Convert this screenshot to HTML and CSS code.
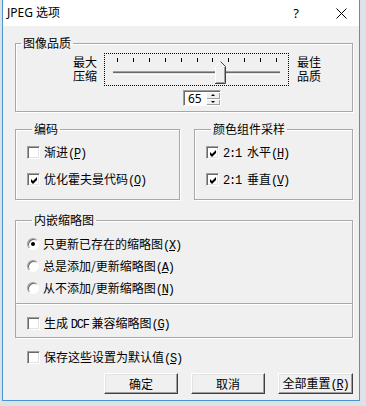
FILE: index.html
```html
<!DOCTYPE html>
<html lang="zh-CN">
<head>
    <meta charset="UTF-8">
    <title>JPEG 选项</title>
    <link rel="stylesheet" href="styles.css">
</head>
<body>
    <div class="dialog">
        <div class="titlebar">
            <span class="title">JPEG 选项</span>
            <span class="help">?</span>
            <span class="close">
                <svg width="11" height="11" viewBox="0 0 11 11"><path d="M0.5 0.5 L10.5 10.5 M10.5 0.5 L0.5 10.5" stroke="#000" stroke-width="1" fill="none"/></svg>
            </span>
        </div>

        <div class="content">
            <fieldset class="group quality">
                <legend>图像品质</legend>
                <div class="slider-row">
                    <div class="side-label"><div>最大</div><div>压缩</div></div>
                    <div class="slider">
                        <svg width="183" height="31" viewBox="0 0 183 31">
                            <g fill="#000">
                                <rect x="12" y="4" width="1" height="4"/>
                                <rect x="28" y="4" width="1" height="4"/>
                                <rect x="44" y="4" width="1" height="4"/>
                                <rect x="60" y="4" width="1" height="4"/>
                                <rect x="76" y="4" width="1" height="4"/>
                                <rect x="92" y="4" width="1" height="4"/>
                                <rect x="107" y="4" width="1" height="4"/>
                                <rect x="123" y="4" width="1" height="4"/>
                                <rect x="139" y="4" width="1" height="4"/>
                                <rect x="155" y="4" width="1" height="4"/>
                                <rect x="171" y="4" width="1" height="4"/>
                            </g>
                            <rect x="8" y="17" width="167" height="1" fill="#a0a0a0"/>
                            <rect x="8" y="18" width="167" height="1" fill="#696969"/>
                            <rect x="8" y="19" width="167" height="1" fill="#e3e3e3"/>
                            <rect x="8" y="20" width="167" height="1" fill="#fff"/>
                            <polygon points="110,12 115,7 121,12 121,30 110,30" fill="#f0f0f0"/>
                            <polyline points="110.5,29.5 110.5,12.5 115.5,7.5" stroke="#fff" fill="none"/>
                            <polyline points="115.5,7.5 120.5,12.5 120.5,29.5 110,29.5" stroke="#404040" fill="none"/>
                            <polyline points="119.5,13 119.5,28.5 111,28.5" stroke="#a0a0a0" fill="none"/>
                        </svg>
                    </div>
                    <div class="side-label"><div>最佳</div><div>品质</div></div>
                </div>
                <div class="spin">
                    <div class="spin-edit">65</div>
                    <div class="spin-btns">
                        <span class="spin-btn"><i class="arrow-up"></i></span>
                        <span class="spin-btn"><i class="arrow-down"></i></span>
                    </div>
                </div>
            </fieldset>

            <div class="pair">
                <fieldset class="group encode">
                    <legend>编码</legend>
                    <div class="option">
                        <span class="cb"></span>
                        <span>渐进<span class="en">(<u>P</u>)</span></span>
                    </div>
                    <div class="option">
                        <span class="cb checked"><svg width="9" height="9" viewBox="0 0 9 9"><path d="M1 3 L3 5 L7 1 L7 4 L3 8 L1 6 Z" fill="#000"/></svg></span>
                        <span>优化霍夫曼代码<span class="en">(<u>O</u>)</span></span>
                    </div>
                </fieldset>
                <fieldset class="group color">
                    <legend>颜色组件采样</legend>
                    <div class="option">
                        <span class="cb checked"><svg width="9" height="9" viewBox="0 0 9 9"><path d="M1 3 L3 5 L7 1 L7 4 L3 8 L1 6 Z" fill="#000"/></svg></span>
                        <span><span class="en">2:1 </span>水平<span class="en">(<u>H</u>)</span></span>
                    </div>
                    <div class="option">
                        <span class="cb checked"><svg width="9" height="9" viewBox="0 0 9 9"><path d="M1 3 L3 5 L7 1 L7 4 L3 8 L1 6 Z" fill="#000"/></svg></span>
                        <span><span class="en">2:1 </span>垂直<span class="en">(<u>V</u>)</span></span>
                    </div>
                </fieldset>
            </div>

            <fieldset class="group thumbs">
                <legend>内嵌缩略图</legend>
                <div class="radio-row">
                    <span class="rb selected"></span>
                    <span>只更新已存在的缩略图<span class="en">(<u>X</u>)</span></span>
                </div>
                <div class="radio-row">
                    <span class="rb"></span>
                    <span>总是添加/更新缩略图<span class="en">(<u>A</u>)</span></span>
                </div>
                <div class="radio-row">
                    <span class="rb"></span>
                    <span>从不添加/更新缩略图<span class="en">(<u>N</u>)</span></span>
                </div>
            </fieldset>
            <div class="dcf-box">
                <div class="option">
                    <span class="cb"></span>
                    <span>生成 <span class="en">DCF</span> 兼容缩略图<span class="en">(<u>G</u>)</span></span>
                </div>
            </div>

            <div class="option save">
                <span class="cb"></span>
                <span>保存这些设置为默认值<span class="en">(<u>S</u>)</span></span>
            </div>

            <div class="buttons">
                <button class="btn ok">确定</button>
                <button class="btn">取消</button>
                <button class="btn reset">全部重置<span class="en">(<u>R</u>)</span></button>
            </div>
        </div>
    </div>
</body>
</html>
```

FILE: styles.css
```css
body {
    margin: 0;
    padding: 0;
    background-color: #dde2e7;
    font-family: "Noto Sans CJK SC", sans-serif;
    font-size: 12px;
    color: #000;
}
.dialog {
    margin-left: 2px;
    width: 358px;
    height: 401px;
    box-sizing: border-box;
    border: 1px solid #4a94cf;
    border-top: none;
    background-color: #f0f0f0;
}
.titlebar {
    height: 26px;
    background-color: #fff;
    display: flex;
    align-items: center;
    padding-left: 4px;
}
.title {
    font-family: "Noto Sans", "Noto Sans CJK SC", sans-serif;
    font-size: 12px;
    line-height: 14px;
}
.help {
    margin-left: auto;
    font-family: "Noto Sans", sans-serif;
    font-size: 13px;
    line-height: 14px;
}
.close {
    display: flex;
    margin-left: 37px;
    margin-right: 12px;
}
.content {
    padding: 0 6px 0 12px;
}
.group {
    margin: 0;
    padding: 0;
    min-width: 0;
    border: 1px solid #a8a8a8;
    box-shadow: inset 1px 1px 0 #fff, 1px 1px 0 #fff;
}
.group legend {
    margin-left: 5px;
    padding: 0 2px;
    line-height: 14px;
    font-size: 12px;
}
.quality {
    margin-top: 10px;
    padding-bottom: 5px;
}
.slider-row {
    display: flex;
    align-items: center;
    margin-top: 3px;
    margin-left: 57px;
    height: 33px;
}
.side-label {
    width: 24px;
    display: flex;
    flex-direction: column;
    gap: 0;
    font-size: 12px;
    line-height: 14px;
    margin-top: -2px;
}
.slider {
    width: 185px;
    height: 33px;
    box-sizing: border-box;
    border: 1px dotted #000;
    margin: 0 8px 0 7px;
}
.slider svg {
    display: block;
}
.spin {
    display: flex;
    width: 38px;
    height: 16px;
    box-sizing: border-box;
    margin: 4px 0 0 167px;
    border: 1px solid;
    border-color: #a0a0a0 #fff #fff #a0a0a0;
    box-shadow: inset 1px 1px 0 #696969;
    background-color: #fff;
}
.spin-edit {
    flex: 1;
    padding: 1px 0 0 4px;
    line-height: 13px;
    font-family: "Noto Sans", sans-serif;
    font-size: 12px;
}
.spin-btns {
    width: 14px;
    display: flex;
    flex-direction: column;
    padding: 1px 0 0 0;
}
.spin-btn {
    flex: 1;
    display: flex;
    align-items: center;
    justify-content: center;
    background-color: #f0f0f0;
    box-shadow: inset 1px 1px 0 #fff, inset -1px -1px 0 #a0a0a0;
}
.arrow-up, .arrow-down {
    width: 0;
    height: 0;
    border-left: 2px solid transparent;
    border-right: 2px solid transparent;
}
.arrow-up {
    border-bottom: 2px solid #000;
}
.arrow-down {
    border-top: 2px solid #000;
}
.pair {
    display: flex;
    gap: 14px;
    margin-top: 10px;
}
.encode {
    width: 152px;
    flex: none;
}
.color {
    flex: 1;
}
.encode, .color {
    padding: 10px 0 13px 11px;
}
.option {
    display: flex;
    align-items: center;
    gap: 4px;
    height: 13px;
    line-height: 13px;
    white-space: nowrap;
}
.option + .option {
    margin-top: 14px;
}
.cb {
    width: 13px;
    height: 13px;
    box-sizing: border-box;
    flex: none;
    display: flex;
    align-items: center;
    justify-content: center;
    border: 1px solid;
    border-color: #a0a0a0 #fff #fff #a0a0a0;
    box-shadow: inset 1px 1px 0 #696969, inset -1px -1px 0 #e3e3e3;
    background-color: #fff;
}
.cb svg {
    margin: 1px 0 0 1px;
}
.en {
    font-family: "Liberation Mono", monospace;
    font-size: 12px;
    letter-spacing: -1.2px;
}
.thumbs {
    margin-top: 13px;
    padding: 9px 0 7px 11px;
}
.radio-row {
    display: flex;
    align-items: center;
    gap: 4px;
    height: 16px;
    white-space: nowrap;
}
.radio-row + .radio-row {
    margin-top: 6px;
}
.rb {
    width: 12px;
    height: 12px;
    box-sizing: border-box;
    flex: none;
    border-radius: 50%;
    border: 1px solid;
    border-color: #a0a0a0 #fff #fff #a0a0a0;
    box-shadow: inset 1px 1px 0 #696969;
    background-color: #fff;
    display: flex;
    align-items: center;
    justify-content: center;
}
.rb.selected::after {
    content: "";
    width: 4px;
    height: 4px;
    border-radius: 50%;
    background-color: #000;
}
.dcf-box {
    border: 1px solid #a8a8a8;
    border-top: none;
    box-shadow: 1px 1px 0 #fff;
    padding: 13px 0 7px 11px;
}
.save {
    margin: 13px 0 0 12px;
}
.buttons {
    display: flex;
    justify-content: flex-end;
    gap: 13px;
    margin-top: 9px;
}
.btn {
    width: 74px;
    height: 21px;
    padding: 0;
    margin: 0;
    font-family: "Noto Sans CJK SC", sans-serif;
    font-size: 12px;
    line-height: 14px;
    color: #000;
    background-color: #f0f0f0;
    border: 1px solid;
    border-color: #fff #404040 #404040 #fff;
    box-shadow: inset -1px -1px 0 #a0a0a0, inset 1px 1px 0 #e3e3e3;
}
.btn.reset {
    width: 75px;
}
```
